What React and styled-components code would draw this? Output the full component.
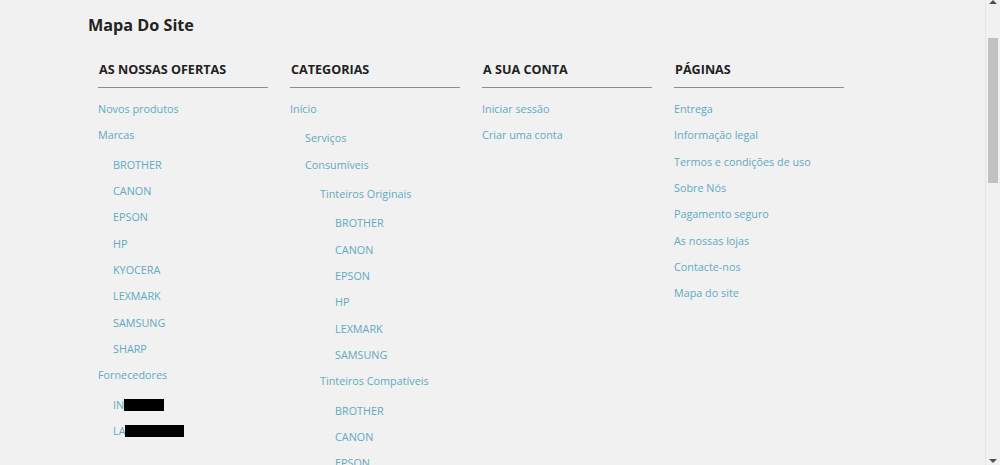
import React from "react";
import styled, { createGlobalStyle } from "styled-components";

const GlobalStyle = createGlobalStyle`
  html, body {
    margin: 0;
    padding: 0;
    background: #f1f1f1;
    overflow: hidden;
  }
  body {
    font-family: "Open Sans", "Noto Sans", sans-serif;
  }
`;

const brandsA = ["BROTHER", "CANON", "EPSON", "HP", "KYOCERA", "LEXMARK", "SAMSUNG", "SHARP"];
const brandsOriginal = ["BROTHER", "CANON", "EPSON", "HP", "LEXMARK", "SAMSUNG"];
const brandsCompat = ["BROTHER", "CANON", "EPSON", "HP", "LEXMARK"];

const sitemap = [
  {
    title: "AS NOSSAS OFERTAS",
    items: [
      { label: "Novos produtos" },
      { label: "Marcas", children: brandsA.map(b => ({ label: b })) },
      {
        label: "Fornecedores",
        children: [
          { label: "IN", hidden: 40 },
          { label: "LA", hidden: 59 }
        ]
      }
    ]
  },
  {
    title: "CATEGORIAS",
    items: [
      {
        label: "Início",
        children: [
          { label: "Serviços" },
          {
            label: "Consumíveis",
            children: [
              { label: "Tinteiros Originais", children: brandsOriginal.map(b => ({ label: b })) },
              { label: "Tinteiros Compatíveis", children: brandsCompat.map(b => ({ label: b })) }
            ]
          }
        ]
      }
    ]
  },
  {
    title: "A SUA CONTA",
    items: [{ label: "Iniciar sessão" }, { label: "Criar uma conta" }]
  },
  {
    title: "PÁGINAS",
    items: [
      { label: "Entrega" },
      { label: "Informação legal" },
      { label: "Termos e condições de uso" },
      { label: "Sobre Nós" },
      { label: "Pagamento seguro" },
      { label: "As nossas lojas" },
      { label: "Contacte-nos" },
      { label: "Mapa do site" }
    ]
  }
];

const LinkList = ({ items, nested }) => (
  <List nested={nested}>
    {items.map((item, i) => (
      <li key={i}>
        <SiteLink href="#">
          {item.label}
          {/* redacted part of the supplier name */}
          {item.hidden && <Redacted style={{ width: item.hidden }} />}
        </SiteLink>
        {item.children && <LinkList items={item.children} nested />}
      </li>
    ))}
  </List>
);

export default function App() {
  return (
    <Page>
      <GlobalStyle />
      <Main>
        <Title>Mapa Do Site</Title>
        <Columns>
          {sitemap.map(col => (
            <Column key={col.title}>
              <Heading>{col.title}</Heading>
              <LinkList items={col.items} />
            </Column>
          ))}
        </Columns>
      </Main>
      <Scrollbar>
        <Arrow />
        <Track>
          <Thumb />
        </Track>
        <Arrow down />
      </Scrollbar>
    </Page>
  );
}

const Page = styled.div`
  display: flex;
  height: 465px;
  overflow: hidden;
  background: #f1f1f1;
`;

const Main = styled.main`
  flex: 1;
  padding: 13px 0 0 88px;
`;

const Title = styled.h1`
  margin: 0;
  font-size: 16.2px;
  line-height: 24px;
  font-weight: 700;
  color: #222;
`;

const Columns = styled.div`
  display: grid;
  grid-template-columns: repeat(4, 192px);
  padding: 22px 0 0 10px;
`;

const Column = styled.section`
  padding-right: 22px;
`;

const Heading = styled.h2`
  margin: 0;
  padding: 1px 0 7px 1px;
  font-size: 12.6px;
  line-height: 20px;
  font-weight: 700;
  color: #222;
  border-bottom: 1px solid #8f8f8f;
`;

const List = styled.ul`
  list-style: none;
  margin: ${p => (p.nested ? "3px 0 0" : "8px 0 0")};
  padding: 0 0 0 ${p => (p.nested ? "15px" : "0")};
  white-space: nowrap;
`;

const SiteLink = styled.a`
  display: block;
  padding: 4px 0;
  font-size: 10.8px;
  line-height: 18.35px;
  color: #62a9c1;
  text-decoration: none;
`;

const Redacted = styled.span`
  display: inline-block;
  height: 12px;
  vertical-align: -2px;
  background: #000;
`;

const Scrollbar = styled.div`
  width: 14px;
  display: flex;
  flex-direction: column;
  align-items: center;
  border-left: 1px solid #e6e6e6;
  background: #f1f1f1;
`;

const Arrow = styled.div`
  width: 0;
  height: 0;
  margin: ${p => (p.down ? "0 0 2px" : "0")};
  border-left: 4px solid transparent;
  border-right: 4px solid transparent;
  ${p => (p.down ? "border-top: 4px solid #505050;" : "border-bottom: 4px solid #505050;")}
`;

const Track = styled.div`
  flex: 1;
  width: 100%;
  padding-top: 34px;
  display: flex;
  justify-content: center;
`;

const Thumb = styled.div`
  width: 10px;
  height: 145px;
  background: #c1c1c1;
`;
